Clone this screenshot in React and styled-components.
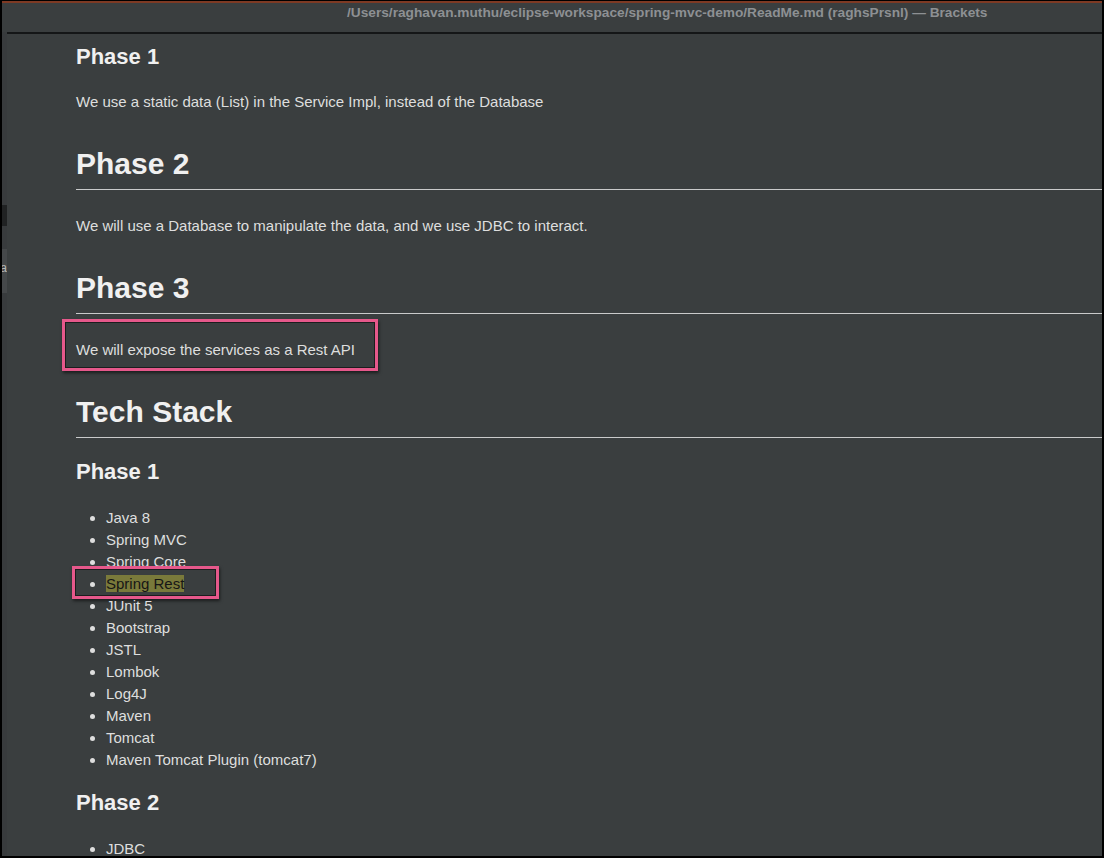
import React from "react";
import styled, { createGlobalStyle } from "styled-components";

const Global = createGlobalStyle`
  html, body { margin: 0; padding: 0; background: #000; }
  body { font-family: "Liberation Sans", Arial, sans-serif; }
`;

const Window = styled.div`
  width: 1104px;
  height: 858px;
  box-sizing: border-box;
  border: 2px solid #000;
  border-top-width: 1px;
  background: #3a3e3f;
  display: flex;
  flex-direction: column;
  overflow: hidden;
`;

const TitleBar = styled.div`
  height: 29px;
  flex: none;
  border-top: 2px solid #7e3a24;
  padding-left: 345px;
  font-size: 13.7px;
  font-weight: 700;
  line-height: 20px;
  color: #8d9093;
  white-space: nowrap;
`;

const Body = styled.div`
  flex: 1;
  display: flex;
  min-height: 0;
`;

const Strip = styled.div`
  width: 5px;
  flex: none;
  background: #383b3d;
  display: flex;
  flex-direction: column;
  overflow: hidden;
`;

const StripBlock = styled.div`
  flex: none;
  height: ${(p) => p.$h}px;
  background: ${(p) => p.$bg || "transparent"};
  color: #b5b8ba;
  font-size: 12px;
  line-height: 18px;
  direction: rtl;
  overflow: hidden;
  white-space: nowrap;
  padding-top: ${(p) => p.$pt || 0}px;
`;

const Main = styled.main`
  flex: 1;
  border-top: 2px solid #141617;
  padding-left: 69px;
  overflow: hidden;
  color: #dedede;
`;

const H3 = styled.h3`
  margin: ${(p) => p.$mt}px 0 0;
  font-size: 22px;
  line-height: 26px;
  font-weight: 700;
  color: #f0f0f0;
`;

const H2 = styled.h2`
  margin: 33px 0 0;
  font-size: 30px;
  line-height: 36px;
  font-weight: 700;
  color: #f0f0f0;
  padding-bottom: 7px;
  border-bottom: 1px solid #c9cacb;
`;

const P = styled.p`
  margin: ${(p) => p.$mt}px 0 0;
  font-size: 15px;
  line-height: 22px;
  position: relative;
`;

const List = styled.ul`
  margin: 22px 0 0;
  padding-left: 30px;
  font-size: 15px;
  line-height: 22px;
`;

const Item = styled.li`
  position: relative;
`;

const Mark = styled.span`
  background: #7a7a3b;
  color: #161616;
`;

const Annot = styled.span`
  position: absolute;
  left: ${(p) => p.$l}px;
  top: ${(p) => p.$t}px;
  width: ${(p) => p.$w}px;
  height: ${(p) => p.$h}px;
  box-sizing: border-box;
  border: 3px solid #e6588b;
  box-shadow: inset 0 0 0 1px #1c1d1e, 1px 2px 3px rgba(0, 0, 0, 0.55);
  pointer-events: none;
`;

const stack = [
  "Java 8",
  "Spring MVC",
  "Spring Core",
  "Spring Rest",
  "JUnit 5",
  "Bootstrap",
  "JSTL",
  "Lombok",
  "Log4J",
  "Maven",
  "Tomcat",
  "Maven Tomcat Plugin (tomcat7)",
];

export default function App() {
  return (
    <>
      <Global />
      <Window>
        <TitleBar>
          /Users/raghavan.muthu/eclipse-workspace/spring-mvc-demo/ReadMe.md (raghsPrsnl) — Brackets
        </TitleBar>
        <Body>
          <Strip>
            <StripBlock $h={173} />
            <StripBlock $h={21} $bg="#202223" />
            <StripBlock $h={23} />
            <StripBlock $h={34} $bg="#45484a" $pt={10}>
              a
            </StripBlock>
          </Strip>
          <Main>
            <H3 $mt={10}>Phase 1</H3>
            <P $mt={21}>We use a static data (List) in the Service Impl, instead of the Database</P>
            <H2>Phase 2</H2>
            <P $mt={25}>We will use a Database to manipulate the data, and we use JDBC to interact.</P>
            <H2>Phase 3</H2>
            <P $mt={25}>
              We will expose the services as a Rest API
              <Annot $l={-14} $t={-20} $w={316} $h={52} />
            </P>
            <H2>Tech Stack</H2>
            <H3 $mt={21}>Phase 1</H3>
            <List>
              {stack.map((s) =>
                s === "Spring Rest" ? (
                  <Item key={s}>
                    <Mark>{s}</Mark>
                    <Annot $l={-34} $t={-7} $w={147} $h={33} />
                  </Item>
                ) : (
                  <Item key={s}>{s}</Item>
                )
              )}
            </List>
            <H3 $mt={19}>Phase 2</H3>
            <List>
              <Item>JDBC</Item>
            </List>
          </Main>
        </Body>
      </Window>
    </>
  );
}
